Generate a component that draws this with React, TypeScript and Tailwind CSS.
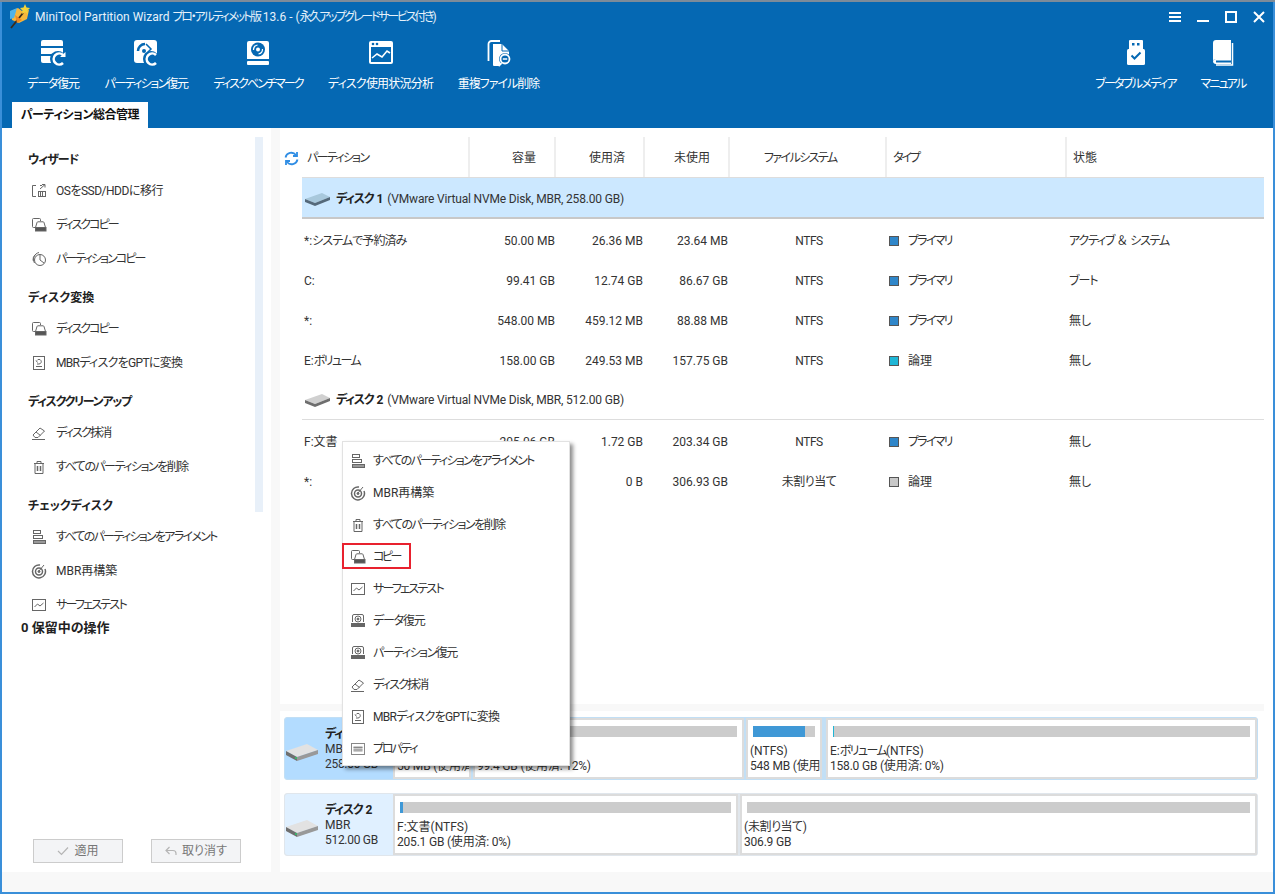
import React from 'react';

const font = 'font-["Roboto","Noto_Sans_CJK_JP",sans-serif] [font-feature-settings:"palt"]';

/* ---- toolbar icons ---- */
const DataIcon = () => (
  <svg width="26" height="28" viewBox="0 0 26 28" fill="#fff">
    <path d="M3 1h18a2 2 0 0 1 2 2v4H1V3a2 2 0 0 1 2-2z" />
    <rect x="1" y="9" width="22" height="6" />
    <path d="M1 17h10v7H3a2 2 0 0 1-2-2z" />
    <circle cx="18" cy="20" r="8" fill="#0568b3" />
    <path d="M23 16a5.500 5.500 0 1 0 0 8" stroke="#fff" strokeWidth="2.600" fill="none" />
    <path d="M20 18h5.500v-5z" />
  </svg>
);
const PartIcon = () => (
  <svg width="26" height="28" viewBox="0 0 26 28">
    <rect x="1" y="1" width="23" height="23" rx="3" fill="#fff" />
    <path d="M5 12a7 7 0 0 1 7-7" stroke="#0568b3" strokeWidth="2.500" fill="none" />
    <circle cx="11" cy="12" r="2" fill="#0568b3" />
    <path d="M13 5l5 5-6 6" stroke="#0568b3" strokeWidth="1.500" fill="none" />
    <circle cx="18" cy="20" r="8" fill="#0568b3" />
    <path d="M23 16a5.500 5.500 0 1 0 0 8" stroke="#fff" strokeWidth="2.600" fill="none" />
  </svg>
);
const BenchIcon = () => (
  <svg width="24" height="26" viewBox="0 0 24 26" fill="#fff">
    <path d="M3 1h18a2 2 0 0 1 2 2v16H1V3a2 2 0 0 1 2-2z" />
    <rect x="1" y="21" width="22" height="4" rx="1" />
    <circle cx="12" cy="9.500" r="7" fill="#0568b3" />
    <circle cx="12" cy="9.500" r="2" fill="#fff" />
    <path d="M7.500 10a5 5 0 0 1 4-5" stroke="#fff" strokeWidth="1.200" fill="none" />
    <path d="M16.500 9a5 5 0 0 1-4 5" stroke="#fff" strokeWidth="1.200" fill="none" />
  </svg>
);
const UsageIcon = () => (
  <svg width="26" height="26" viewBox="0 0 26 26">
    <rect x="1" y="1" width="24" height="23" rx="2" fill="#fff" />
    <rect x="3" y="7" width="20" height="15" fill="#0568b3" />
    <circle cx="5" cy="4" r="1.300" fill="#0568b3" />
    <circle cx="9" cy="4" r="1.300" fill="#0568b3" />
    <path d="M4 18l5-4 5 3 5-6 3 2" stroke="#fff" strokeWidth="1.600" fill="none" />
  </svg>
);
const DupIcon = () => (
  <svg width="26" height="28" viewBox="0 0 26 28">
    <path d="M2.500 22V5a3 3 0 0 1 3-3H14" stroke="#fff" strokeWidth="1.800" fill="none" />
    <path d="M7 5h9l7 7v5H14v10H8a1 1 0 0 1-1-1z" fill="#fff" />
    <path d="M16 5v7h7" fill="none" stroke="#0568b3" strokeWidth="1" />
    <circle cx="19" cy="20" r="6" fill="#0568b3" />
    <circle cx="19" cy="20" r="4.500" fill="none" stroke="#fff" strokeWidth="1.800" />
    <path d="M16.800 20h4.400" stroke="#fff" strokeWidth="1.500" />
    <path d="M15.500 24l-3 3" stroke="#fff" strokeWidth="2" />
  </svg>
);
const UsbIcon = () => (
  <svg width="20" height="26" viewBox="0 0 20 26">
    <rect x="3" y="0" width="14" height="10" rx="1" fill="#fff" />
    <rect x="6" y="3" width="2.500" height="2.500" fill="#0568b3" />
    <rect x="11" y="3" width="2.500" height="2.500" fill="#0568b3" />
    <rect x="1" y="9" width="18" height="16" rx="1.500" fill="#fff" />
    <path d="M5.500 15.500l3 3 6-6" stroke="#0568b3" strokeWidth="2" fill="none" />
  </svg>
);
const BookIcon = () => (
  <svg width="24" height="26" viewBox="0 0 24 26">
    <path d="M5 0h15v19H5a3 3 0 0 0-3 3V3a3 3 0 0 1 3-3z" fill="#fff" />
    <path d="M2 22a3 3 0 0 1 3-3h15v5H5a3 3 0 0 1-3-2z" fill="#fff" />
    <rect x="5" y="20.500" width="15" height="2" fill="#0568b3" />
    <path d="M21.500 3v22H5" stroke="#fff" strokeWidth="1.500" fill="none" />
  </svg>
);
const Logo = () => (
  <svg width="24" height="28" viewBox="0 0 24 28">
    <path d="M3 8l7-3 4 3 7-1-2 9-8 4-7-3z" fill="#f6b73c" />
    <path d="M2 8l7-3-3 10-4 1z" fill="#4fb3e8" />
    <path d="M3 25L15 10" stroke="#3a2a1a" strokeWidth="1.800" />
    <path d="M17 1l1.500 3.500L22 5l-2.500 2.500.5 3.500-3-2-3 2 .5-3.500L12 5l3.500-.5z" fill="#f3d23a" />
    <path d="M7 12l7 5-5 3z" fill="#f08a24" />
  </svg>
);

/* ---- small gray icons ---- */
const S = ({ children }: { children: React.ReactNode }) => (
  <svg width="16" height="16" viewBox="0 0 16 16" fill="none" stroke="#666" strokeWidth="1">
    {children}
  </svg>
);
const MigrateIcon = () => (
  <S>
    <path d="M5 2.500H1.500v11H5M9 2.500h2" />
    <path d="M9 6l5-4.500M11 1.500h3v3" />
    <rect x="7.500" y="8.500" width="7" height="5" />
    <path d="M9.500 8.500v5M11.500 8.500v5" />
  </S>
);
const CopyIcon = () => (
  <S>
    <path d="M4 10.500H2.500a1 1 0 0 1-1-1v-7a1 1 0 0 1 1-1h6a1 1 0 0 1 1 1V4" />
    <path d="M4.500 10.500l1.500-5a1 1 0 0 1 1-.7h5a1 1 0 0 1 1 .7l1.500 5" />
    <rect x="4.500" y="10.500" width="10.500" height="3.500" fill="#555" />
  </S>
);
const PartCopyIcon = () => (
  <S>
    <circle cx="9" cy="9" r="5.500" />
    <path d="M9 3.500V9l4 3" />
    <path d="M3.500 12A7 7 0 0 1 8 1.500" />
    <path d="M2 9.500A7 7 0 0 1 4 4" />
  </S>
);
const ConvertIcon = () => (
  <S>
    <rect x="2.500" y="1.500" width="11" height="13" />
    <path d="M6 5.500a2.300 2.300 0 1 1 2 3.500H6M6.500 7.500L5 5.500" />
    <path d="M5 11.500h6" />
  </S>
);
const EraserIcon = () => (
  <S>
    <path d="M2 10l7-7 4.500 3-6.500 6.500H4z" />
    <path d="M1 14.500h13M5 7l4.500 3.500" />
  </S>
);
const TrashIcon = () => (
  <S>
    <path d="M3 4.500h10M6 4.500v-2h4v2" />
    <path d="M4 4.500v10h8v-10" />
    <path d="M6.500 7v5M9.500 7v5" strokeWidth="1.500" />
  </S>
);
const AlignIcon = () => (
  <S>
    <rect x="2.500" y="1.500" width="7" height="3" />
    <rect x="2.500" y="6.500" width="9" height="3" />
    <rect x="2.500" y="11.500" width="12" height="3" fill="#999" />
  </S>
);
const RebuildIcon = () => (
  <S>
    <path d="M9 2a6.500 6.500 0 1 0 5 4" strokeWidth="1.500" />
    <circle cx="8" cy="8.500" r="3.500" strokeWidth="1.500" />
    <circle cx="8" cy="8.500" r="1" fill="#666" />
    <path d="M8 8l5-6" />
  </S>
);
const SurfaceIcon = () => (
  <S>
    <rect x="1.500" y="2.500" width="13" height="11" />
    <path d="M3.500 10l3-3 2.500 2 3.500-3" />
  </S>
);
const RecoverIcon = () => (
  <S>
    <path d="M2.500 9V3a1.500 1.500 0 0 1 1.500-1.500h8A1.500 1.500 0 0 1 13.500 3v6" />
    <circle cx="8" cy="6" r="3" />
    <circle cx="8" cy="6" r="1" fill="#666" />
    <rect x="1.500" y="10.500" width="13" height="3" fill="#666" />
  </S>
);
const PropIcon = () => (
  <S>
    <rect x="1.500" y="2.500" width="13" height="11" stroke="#888" />
    <rect x="3.500" y="5" width="9" height="6" fill="#ccc" stroke="none" />
    <path d="M3.500 6.500h9M3.500 9h9" stroke="#888" />
  </S>
);

const DiskTable = ({ top, side }: { top: string; side: string }) => (
  <svg width="26" height="13" viewBox="0 0 26 13">
    <path d="M0 6L17 0l8 4-15 6z" fill={top} />
    <path d="M0 6l10 4v3L0 9z" fill={side} />
    <path d="M10 10l15-6v3l-15 6z" fill={side} />
  </svg>
);
const DiskMap = () => (
  <svg width="33" height="17" viewBox="0 0 33 17">
    <path d="M0 7L21 0l11 6-21 7z" fill="#e2e2e2" />
    <path d="M0 7l11 6v4L0 11z" fill="#6f6f6f" />
    <path d="M11 13l21-7v4l-21 7z" fill="#999" />
    <circle cx="10" cy="14" r="1.100" fill="#34c46c" />
  </svg>
);

const Tool = ({ icon, label, w, t }: { icon: React.ReactNode; label: string; w: string; t: string }) => (
  <div className={`flex flex-col items-center ${w}`}>
    <div className="h-[30px] flex items-center justify-center">{icon}</div>
    <div className={`mt-[8px] text-[12px] leading-[16px] whitespace-nowrap text-white ${t}`}>{label}</div>
  </div>
);

const Heading = ({ children, t = '' }: { children: React.ReactNode; t?: string }) => (
  <div className={`h-[24px] mb-[2px] flex items-center text-[12px] font-bold text-[#222] ${t}`}>{children}</div>
);
const SideItem = ({ icon, label, t = '' }: { icon: React.ReactNode; label: string; t?: string }) => (
  <div className="h-[34px] flex items-center text-[12px] text-[#333]">
    <div className="w-[28px] pl-[3px] flex items-center">{icon}</div>
    <span className={`whitespace-nowrap ${t}`}>{label}</span>
  </div>
);

const primary = <span className="tracking-[-1.8px]">プライマリ</span>;
const rows = [
  { name: <>*:<span className="tracking-[-0.9px]">システムで予約済み</span></>, cap: '50.00 MB', used: '26.36 MB', free: '23.64 MB', fs: 'NTFS', sq: 'bg-[#2f86c9]', type: primary, state: <><span className="tracking-[-1.2px]">アクティブ</span> ＆ <span className="tracking-[-1.2px]">システム</span></> },
  { name: 'C:', cap: '99.41 GB', used: '12.74 GB', free: '86.67 GB', fs: 'NTFS', sq: 'bg-[#2f86c9]', type: primary, state: <span className="tracking-[-1px]">ブート</span> },
  { name: '*:', cap: '548.00 MB', used: '459.12 MB', free: '88.88 MB', fs: 'NTFS', sq: 'bg-[#2f86c9]', type: primary, state: '無し' },
  { name: <>E:<span className="tracking-[-1.6px]">ボリューム</span></>, cap: '158.00 GB', used: '249.53 MB', free: '157.75 GB', fs: 'NTFS', sq: 'bg-[#1fb6d6]', type: '論理', state: '無し' },
];
const rows2 = [
  { name: 'F:文書', cap: '205.06 GB', used: '1.72 GB', free: '203.34 GB', fs: 'NTFS', sq: 'bg-[#2f86c9]', type: primary, state: '無し' },
  { name: '*:', cap: '306.93 GB', used: '0 B', free: '306.93 GB', fs: '未割り当て', sq: 'bg-[#c8c8c8]', type: '論理', state: '無し' },
];

type Row = (typeof rows)[number];

const PartRow = ({ r }: { r: Row }) => (
  <div className="h-[40px] pt-[2px] flex items-center text-[12px] text-[#333]">
    <div className="w-[168px] pl-[2px] whitespace-nowrap">{r.name}</div>
    <div className="w-[86px] text-right pr-[1px] whitespace-nowrap">{r.cap}</div>
    <div className="w-[89px] text-right pr-[2px] whitespace-nowrap">{r.used}</div>
    <div className="w-[85px] text-right pr-[2px] whitespace-nowrap">{r.free}</div>
    <div className="w-[157px] text-center pl-[1px] tracking-[-0.5px]">{r.fs}</div>
    <div className="w-[180px] flex items-center pl-[2px]">
      <span className={`w-[10px] h-[10px] mr-[9px] border border-[#555] ${r.sq}`} />
      {r.type}
    </div>
    <div className="pl-[2px] whitespace-nowrap">{r.state}</div>
  </div>
);

const Cell = ({ line1, line2, w = '', bar, color }: { line1: React.ReactNode; line2: string; w?: string; bar: string; color: string }) => (
  <div className={`h-full shrink-0 border-[2px] border-[#dcdcdc] bg-white overflow-hidden ${w}`}>
    <div className="h-[11px] mt-[6px] mx-[5px] bg-[#cccccc] flex">
      <div className={`h-full ${bar} ${color}`} />
    </div>
    <div className="mt-[7px] ml-[2px] text-[12px] leading-[15px] text-[#333] whitespace-nowrap">
      <div>{line1}</div>
      <div className="tracking-[-0.2px]">{line2}</div>
    </div>
  </div>
);

const DiskCard = ({ num, size, bg }: { num: string; size: string; bg: string }) => (
  <div className={`w-[108px] h-full shrink-0 rounded-l-[3px] flex items-center ${bg}`}>
    <div className="ml-[1px] mt-[7px] w-[39px]">
      <DiskMap />
    </div>
    <div className="pt-[2px] text-[12px] leading-[15px] text-[#333] whitespace-nowrap">
      <div className="font-bold text-[#222]"><span className="tracking-[-1.2px]">ディスク</span> {num}</div>
      <div>MBR</div>
      <div className="tracking-[-0.3px]">{size}</div>
    </div>
  </div>
);

const DiskRowLabel = ({ num, desc }: { num: string; desc: string }) => (
  <>
    <span className="font-bold text-[#222]"><span className="tracking-[-1.2px]">ディスク</span> {num}</span>
    <span className="ml-[4px] tracking-[-0.17px]">{desc}</span>
  </>
);

const menu = [
  { icon: <AlignIcon />, label: 'すべてのパーティションをアライメント', t: 'tracking-[-1.7px]' },
  { icon: <RebuildIcon />, label: 'MBR再構築', t: '' },
  { icon: <TrashIcon />, label: 'すべてのパーティションを削除', t: 'tracking-[-1.5px]' },
  { icon: <CopyIcon />, label: 'コピー', t: 'tracking-[-2.5px]' },
  { icon: <SurfaceIcon />, label: 'サーフェステスト', t: 'tracking-[-1.75px]' },
  { icon: <RecoverIcon />, label: 'データ復元', t: 'tracking-[-1.2px]' },
  { icon: <RecoverIcon />, label: 'パーティション復元', t: 'tracking-[-1.5px]' },
  { icon: <EraserIcon />, label: 'ディスク抹消', t: 'tracking-[-1.8px]' },
  { icon: <ConvertIcon />, label: 'MBRディスクをGPTに変換', t: 'tracking-[-0.7px]' },
  { icon: <PropIcon />, label: 'プロパティ', t: 'tracking-[-2px]' },
];

export default function App() {
  return (
    <div className={`relative w-[1275px] h-[894px] flex flex-col overflow-hidden bg-white ${font}`}>
      <div className="h-[2px] shrink-0 bg-[#7d8b99]" />
      <div className="flex-1 flex flex-col border-x-[2px] border-b-[2px] border-x-[#3a8fd9] border-b-[#3a8fd9] min-h-0">
        {/* title + toolbar */}
        <header className="h-[126px] shrink-0 bg-[#0568b3] flex flex-col">
          <div className="h-[30px] flex items-center">
            <div className="ml-[6px] w-[27px]">
              <Logo />
            </div>
            <div className="text-[12px] text-[#e6f1fa] whitespace-nowrap">
              MiniTool Partition Wizard <span className="tracking-[-2.2px]">プロ・アルティメット版</span> 13.6 - (<span className="tracking-[-2.2px]">永久アップグレードサービス付き</span>)
            </div>
            <div className="ml-auto mr-[8px] flex items-center gap-[16px]">
              <svg width="12" height="12" viewBox="0 0 12 12" stroke="#fff" strokeWidth="2"><path d="M0 2h12M0 6h12M0 10h12" /></svg>
              <svg width="12" height="12" viewBox="0 0 12 12" stroke="#fff" strokeWidth="2"><path d="M0 10h12" /></svg>
              <svg width="12" height="12" viewBox="0 0 12 12" stroke="#fff" strokeWidth="2" fill="none"><rect x="1" y="1" width="10" height="10" /></svg>
              <svg width="12" height="12" viewBox="0 0 12 12" stroke="#fff" strokeWidth="2"><path d="M1 1l10 10M11 1L1 11" /></svg>
            </div>
          </div>
          <div className="h-[70px] flex pt-[6px]">
            <div className="ml-[25px] flex gap-[25px]">
              <Tool icon={<DataIcon />} label="データ復元" w="w-[52px]" t="tracking-[-1.2px]" />
              <Tool icon={<PartIcon />} label="パーティション復元" w="w-[84px]" t="tracking-[-1.6px]" />
              <Tool icon={<BenchIcon />} label="ディスクベンチマーク" w="w-[90px]" t="tracking-[-1.9px]" />
              <Tool icon={<UsageIcon />} label="ディスク使用状況分析" w="w-[105px]" t="tracking-[-0.8px]" />
              <Tool icon={<DupIcon />} label="重複ファイル削除" w="w-[81px]" t="tracking-[-1px]" />
            </div>
            <div className="ml-auto mr-[27px] flex gap-[24px]">
              <Tool icon={<UsbIcon />} label="ブータブルメディア" w="w-[81px]" t="tracking-[-1.7px]" />
              <Tool icon={<BookIcon />} label="マニュアル" w="w-[46px]" t="tracking-[-1.8px]" />
            </div>
          </div>
          <div className="mt-auto pl-[10px]">
            <div className="w-[136px] h-[26px] bg-white flex items-center justify-center text-[12px] font-bold text-[#111] whitespace-nowrap tracking-[-0.45px]">パーティション総合管理</div>
          </div>
        </header>

        <div className="flex-1 flex min-h-0">
          {/* left panel */}
          <aside className="w-[269px] shrink-0 flex flex-col">
            <div className="h-[484px] shrink-0 flex overflow-hidden">
              <div className="w-[253px] pt-[20px] pl-[26px]">
                <Heading t="tracking-[-1px]">ウィザード</Heading>
                <SideItem icon={<MigrateIcon />} label="OSをSSD/HDDに移行" t="tracking-[-0.5px]" />
                <SideItem icon={<CopyIcon />} label="ディスクコピー" t="tracking-[-2px]" />
                <SideItem icon={<PartCopyIcon />} label="パーティションコピー" t="tracking-[-1.9px]" />
                <div className="h-[10px]" />
                <Heading>ディスク変換</Heading>
                <SideItem icon={<CopyIcon />} label="ディスクコピー" t="tracking-[-2px]" />
                <SideItem icon={<ConvertIcon />} label="MBRディスクをGPTに変換" t="tracking-[-0.7px]" />
                <div className="h-[10px]" />
                <Heading t="tracking-[-1.3px]">ディスククリーンアップ</Heading>
                <SideItem icon={<EraserIcon />} label="ディスク抹消" t="tracking-[-1.8px]" />
                <SideItem icon={<TrashIcon />} label="すべてのパーティションを削除" t="tracking-[-1.5px]" />
                <div className="h-[10px]" />
                <Heading>チェックディスク</Heading>
                <SideItem icon={<AlignIcon />} label="すべてのパーティションをアライメント" t="tracking-[-1.7px]" />
                <SideItem icon={<RebuildIcon />} label="MBR再構築" />
                <SideItem icon={<SurfaceIcon />} label="サーフェステスト" t="tracking-[-1.75px]" />
              </div>
              <div className="w-[8px] h-[375px] mt-[9px] bg-[#e8f0f9]" />
            </div>
            <div className="h-[30px] pt-[2px] pl-[19px] flex items-center text-[13px] font-bold text-[#222]">0 保留中の操作</div>
            <div className="mt-auto mb-[9px] ml-[31px] flex gap-[28px]">
              <button className="w-[90px] h-[24px] flex items-center justify-center gap-[5px] bg-[#f3f4f6] border border-[#cccccc] text-[12px] text-[#777]">
                <svg width="12" height="10" viewBox="0 0 12 10" fill="none" stroke="#b5b5b5" strokeWidth="1.200"><path d="M1 5l3.500 3.500L11 1.500" /></svg>
                適用
              </button>
              <button className="w-[90px] h-[24px] flex items-center justify-center gap-[5px] bg-[#f3f4f6] border border-[#cccccc] text-[12px] text-[#777]">
                <svg width="12" height="10" viewBox="0 0 12 10" fill="none" stroke="#b5b5b5" strokeWidth="1.200"><path d="M4.500 1L1 4.500 4.500 8M1 4.500h7a3 3 0 0 1 3 3V9" /></svg>
                取り消す
              </button>
            </div>
          </aside>
          <div className="w-[9px] shrink-0 bg-[#f8f8f8]" />

          {/* main */}
          <main className="flex-1 min-w-0 flex flex-col">
            <div className="h-[576px] shrink-0 pt-[9px]">
              <div className="h-[40px] flex items-center text-[12px] text-[#333]">
                <div className="w-[22px] pl-[4px] pt-[2px]">
                  <svg width="15" height="15" viewBox="0 0 15 15" fill="none" stroke="#2f8de4" strokeWidth="1.800">
                    <path d="M1.500 6.500A6 6 0 0 1 12 4" />
                    <path d="M13 1v4H9" />
                    <path d="M13.500 8.500A6 6 0 0 1 3 11" />
                    <path d="M2 14v-4h4" />
                  </svg>
                </div>
                <div className="w-[168px] h-full pt-[2px] flex items-center pl-[5px] border-r-[2px] border-[#eeeeee] tracking-[-1.7px]">パーティション</div>
                <div className="w-[86px] h-full pt-[2px] flex items-center justify-end pr-[18px] border-r-[2px] border-[#eeeeee]">容量</div>
                <div className="w-[89px] h-full pt-[2px] flex items-center justify-end pr-[18px] border-r-[2px] border-[#eeeeee]">使用済</div>
                <div className="w-[85px] h-full pt-[2px] flex items-center justify-end pr-[18px] border-r-[2px] border-[#eeeeee]">未使用</div>
                <div className="w-[157px] h-full pt-[2px] flex items-center pl-[34px] border-r-[2px] border-[#eeeeee] tracking-[-1.6px]">ファイルシステム</div>
                <div className="w-[180px] h-full pt-[2px] flex items-center pl-[6px] border-r-[2px] border-[#eeeeee] tracking-[-2px]">タイプ</div>
                <div className="w-[197px] h-full pt-[2px] flex items-center pl-[6px]">状態</div>
              </div>
              <div className="ml-[22px] w-[962px]">
                <div className="h-[42px] pt-[2px] bg-[#cce8ff] border-t border-t-[#dddddd] border-b-[2px] border-b-[#c8c8c8] flex items-center text-[12px] text-[#333]">
                  <div className="ml-[3px] w-[31px] mt-[2px]">
                    <DiskTable top="#a8c8dc" side="#55697a" />
                  </div>
                  <DiskRowLabel num="1" desc="(VMware Virtual NVMe Disk, MBR, 258.00 GB)" />
                </div>
                <div className="h-[1px]" />
                {rows.map((r, i) => (
                  <PartRow key={i} r={r} />
                ))}
                <div className="h-[40px] pt-[1px] mb-[1px] border-b border-[#dddddd] flex items-center text-[12px] text-[#333]">
                  <div className="ml-[3px] w-[31px]">
                    <DiskTable top="#d0d0d0" side="#6e6e6e" />
                  </div>
                  <DiskRowLabel num="2" desc="(VMware Virtual NVMe Disk, MBR, 512.00 GB)" />
                </div>
                {rows2.map((r, i) => (
                  <PartRow key={i} r={r} />
                ))}
              </div>
            </div>
            <div className="h-[7px] shrink-0 w-[984px] bg-[#f8f8f8]" />

            {/* disk map */}
            <div className="mt-[6px] ml-[4px] w-[974px] h-[63px] flex border border-[#c2dff5] bg-[#c2dff5] rounded-[3px]">
              <DiskCard num="1" size="258.00 GB" bg="bg-[#b3dcff]" />
              <div className="flex-1 flex gap-[2px] min-w-0">
                <Cell line1={<>*:<span className="tracking-[-0.9px]">システムで予約済み</span>(NTFS)</>} line2="50 MB (使用済: 53%)" w="w-[78px]" bar="w-[53%]" color="bg-[#3f98d6]" />
                <Cell line1="C:(NTFS)" line2="99.4 GB (使用済: 12%)" w="w-[271px]" bar="w-[12%]" color="bg-[#3f98d6]" />
                <Cell line1="(NTFS)" line2="548 MB (使用済: 83%)" w="w-[76px]" bar="w-[84%]" color="bg-[#3f98d6]" />
                <Cell line1={<>E:<span className="tracking-[-1.6px]">ボリューム</span>(NTFS)</>} line2="158.0 GB (使用済: 0%)" w="flex-1 ml-[2px]" bar="w-[1px]" color="bg-[#1fb6d6]" />
              </div>
            </div>
            <div className="mt-[13px] ml-[4px] w-[974px] h-[63px] flex border border-[#e0e6ec] bg-[#e0e6ec] rounded-[3px]">
              <DiskCard num="2" size="512.00 GB" bg="bg-[#e0f0ff]" />
              <div className="flex-1 flex gap-[2px] min-w-0">
                <Cell line1="F:文書(NTFS)" line2="205.1 GB (使用済: 0%)" w="w-[345px]" bar="w-[3px]" color="bg-[#3f98d6]" />
                <Cell line1={<>(<span className="tracking-[-0.5px]">未割り当て</span>)</>} line2="306.9 GB" w="flex-1" bar="w-0" color="" />
              </div>
            </div>
          </main>
        </div>
        <div className="h-[20px] shrink-0 bg-[#f8f8f8]" />
      </div>

      {/* context menu */}
      <div className="absolute left-[342px] top-[441px] w-[228px] h-[325px] bg-white border border-[#e2e2e2] pt-[3px] shadow-[3px_3px_4px_rgba(0,0,0,0.45)]">
        {menu.map((m, i) => (
          <div key={i} className="h-[32px] flex items-center text-[12px] text-[#333]">
            <div className="w-[30px] pl-[7px] flex items-center">{m.icon}</div>
            <span className={`whitespace-nowrap ${m.t}`}>{m.label}</span>
          </div>
        ))}
        <div className="absolute left-[-1px] top-[101px] w-[69px] h-[26px] border-[2px] border-[#e8212e]" />
      </div>
    </div>
  );
}
